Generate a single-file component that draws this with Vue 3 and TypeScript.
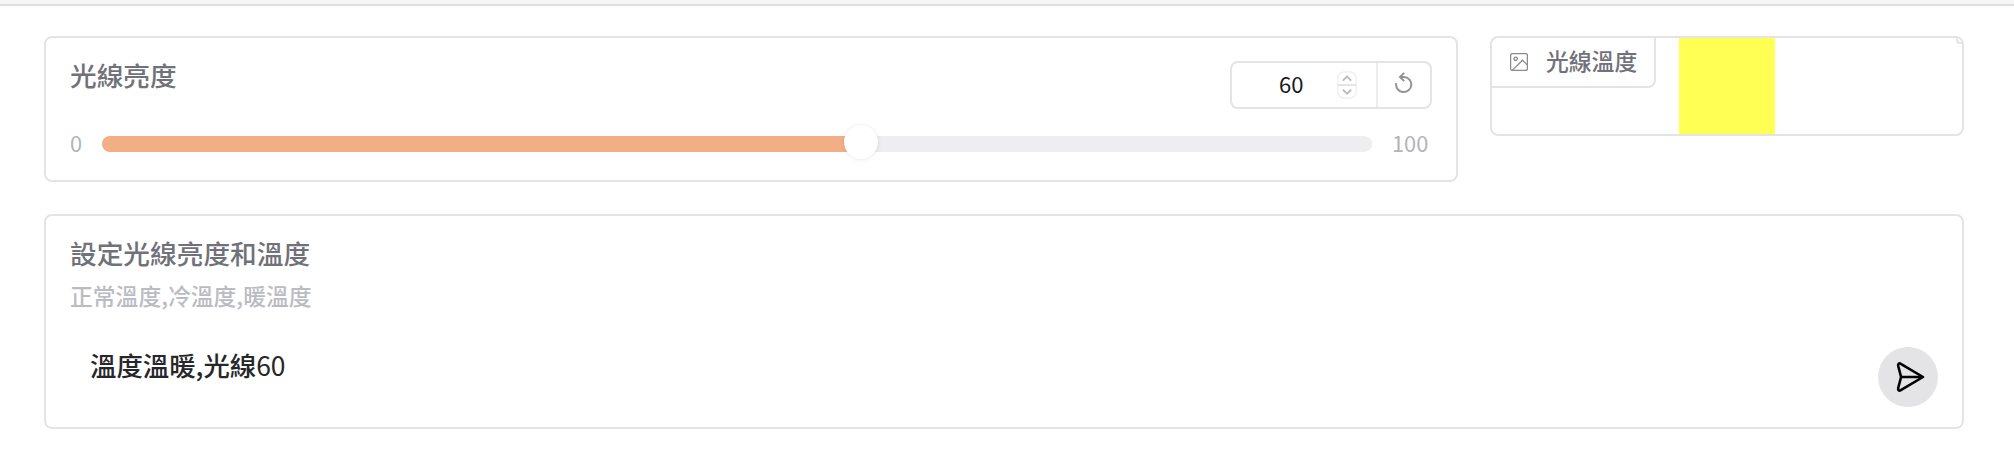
<script setup lang="ts">
import { ref } from 'vue'

const min = 0
const max = 100
const brightness = ref<number>(60)
const promptWords = ref<string>('溫度溫暖,光線')
</script>

<template>
  <div class="page">
    <div class="topbar"></div>
    <main class="content">
      <div class="row">
        <section class="card slider-card">
          <div class="head">
            <span class="title">光線亮度</span>
            <div class="number-box">
              <div class="number">
                <span class="value">{{ brightness }}</span>
                <svg class="spinner" width="20" height="28" viewBox="0 0 20 28">
                  <rect x="0.8" y="0.8" width="18.4" height="26.4" rx="6.5" fill="#fff" stroke="#ededed" stroke-width="1.2" />
                  <path d="M1 14H19" stroke="#e4e4e4" stroke-width="2" />
                  <path d="M5.8 9.6L10 5.6l4.2 4M5.8 18.6l4.2 4 4.2-4" fill="none" stroke="#bcbcbc" stroke-width="2" />
                </svg>
              </div>
              <button class="reset" aria-label="Reset">
                <svg width="18" height="22" viewBox="0 0 18 22" fill="none" stroke="#929292" stroke-width="2">
                  <path d="M1.2 11.2A7.6 7.6 0 1 0 8.8 4.9H5.2" />
                  <path d="M9.2 0.9L5 4.9l4.2 4.2" />
                </svg>
              </button>
            </div>
          </div>
          <div class="range">
            <span class="bound low">{{ min }}</span>
            <div class="track">
              <div class="fill" :style="{ width: brightness + '%' }"></div>
              <div class="thumb" :style="{ left: brightness + '%' }"></div>
            </div>
            <span class="bound">{{ max }}</span>
          </div>
        </section>

        <section class="card image-card">
          <div class="tab">
            <svg width="18" height="18" viewBox="0 0 18 18" fill="none" stroke="#8a8a92" stroke-width="1.3">
              <rect x="0.6" y="0.6" width="16.8" height="16.8" rx="1.7" />
              <circle cx="5.7" cy="5.8" r="1.7" />
              <path d="M2.2 17.4L12.5 7.2l4.9 4.9" />
            </svg>
            <span class="tab-label">光線溫度</span>
          </div>
          <div class="swatch"></div>
          <div class="corner"></div>
        </section>
      </div>

      <section class="card prompt-card">
        <div class="title">設定光線亮度和溫度</div>
        <div class="info">正常溫度,冷溫度,暖溫度</div>
        <div class="entry">
          <span class="text">{{ promptWords }}<span class="digits">{{ brightness }}</span></span>
          <button class="send" aria-label="Send">
            <svg width="32" height="32" viewBox="0 0 32 32" fill="none" stroke="#000" stroke-width="2.6" stroke-linejoin="round" stroke-linecap="round">
              <path d="M7.1 16L4.2 5C3.7 3 5.1 1.8 6.8 2.8L29 16L6.8 29.2C5.1 30.2 3.7 29 4.2 27Z" />
              <path d="M7.1 16H28" />
            </svg>
          </button>
        </div>
      </section>
    </main>
  </div>
</template>

<style>
body {
  margin: 0;
  background: #fff;
}
</style>

<style scoped>
* {
  box-sizing: border-box;
}
.page {
  height: 472px;
  overflow: hidden;
  font-family: "Noto Sans CJK TC", "Noto Sans", sans-serif;
  color: #27272a;
}
.topbar {
  height: 6px;
  background: #f6f6f6;
  border-bottom: 2px solid #dedede;
}
.content {
  display: flex;
  flex-direction: column;
  gap: 32px;
  padding: 30px 50px 0 44px;
}
.row {
  display: flex;
  align-items: flex-start;
  gap: 32px;
}
.card {
  border: 2px solid #e4e4e5;
  border-radius: 8px;
  background: #fff;
}
button {
  padding: 0;
  border: 0;
  background: none;
  display: flex;
  align-items: center;
  justify-content: center;
}
.title {
  font-size: 26.7px;
  line-height: 32px;
  font-weight: 500;
  color: #71717a;
}
.slider-card {
  width: 1414px;
  height: 146px;
  padding: 21px 24px 0;
}
.head {
  display: flex;
  justify-content: space-between;
  align-items: flex-start;
}
.number-box {
  display: flex;
  width: 202px;
  height: 48px;
  margin-top: 2px;
  border: 2px solid #e4e4e5;
  border-radius: 8px;
}
.number {
  flex: 1;
  display: flex;
  align-items: center;
  justify-content: space-between;
  padding: 0 19px 0 47px;
  border-right: 2px solid #ececee;
}
.value {
  padding-bottom: 4px;
  font-size: 22px;
  line-height: 32px;
  font-weight: 400;
  color: #18181b;
}
.reset {
  width: 52px;
  padding-bottom: 4px;
}
.range {
  display: flex;
  align-items: center;
  height: 32px;
  margin-top: 19px;
}
.bound {
  padding-bottom: 2px;
  font-size: 21.8px;
  line-height: 32px;
  color: #b3b3ba;
}
.low {
  width: 32px;
}
.track {
  position: relative;
  width: 1270px;
  height: 16px;
  margin-right: 20px;
  border-radius: 8px;
  background: #eeeef0;
}
.fill {
  height: 16px;
  border-radius: 8px 0 0 8px;
  background: #f2af87;
}
.thumb {
  position: absolute;
  top: -11px;
  width: 34px;
  height: 34px;
  margin-left: -20px;
  border-radius: 50%;
  background: #fff;
  box-shadow: 0 0 3px rgba(0, 0, 0, 0.08), 0 2px 8px rgba(0, 0, 0, 0.04);
}
.image-card {
  position: relative;
  width: 474px;
  height: 100px;
  overflow: hidden;
}
.tab {
  position: absolute;
  top: 0;
  left: 0;
  display: flex;
  align-items: center;
  gap: 18px;
  width: 164px;
  height: 50px;
  padding-left: 18px;
  border-right: 2px solid #e4e4e5;
  border-bottom: 2px solid #e4e4e5;
  border-bottom-right-radius: 8px;
}
.tab-label {
  padding-bottom: 2px;
  font-size: 22.8px;
  line-height: 32px;
  font-weight: 500;
  color: #71717a;
}
.swatch {
  width: 96px;
  height: 96px;
  margin: 0 auto;
  background: #ffff54;
}
.corner {
  position: absolute;
  top: -2px;
  right: -2px;
  width: 8px;
  height: 8px;
  border: 2px solid #e4e4e5;
  border-radius: 4px;
}
.prompt-card {
  width: 1920px;
  height: 215px;
  padding: 21px 24px 0;
}
.info {
  margin-top: 12px;
  font-size: 22.8px;
  line-height: 30px;
  font-weight: 500;
  color: #bbbbc2;
}
.entry {
  display: flex;
  justify-content: space-between;
  align-items: flex-start;
  padding-left: 20px;
}
.text {
  padding-top: 36px;
  font-size: 26.4px;
  line-height: 36px;
  font-weight: 500;
}
.digits {
  font-weight: 400;
}
.send {
  width: 60px;
  height: 60px;
  margin-top: 36px;
  padding-left: 3px;
  border-radius: 50%;
  background: #e4e4e6;
}
</style>
